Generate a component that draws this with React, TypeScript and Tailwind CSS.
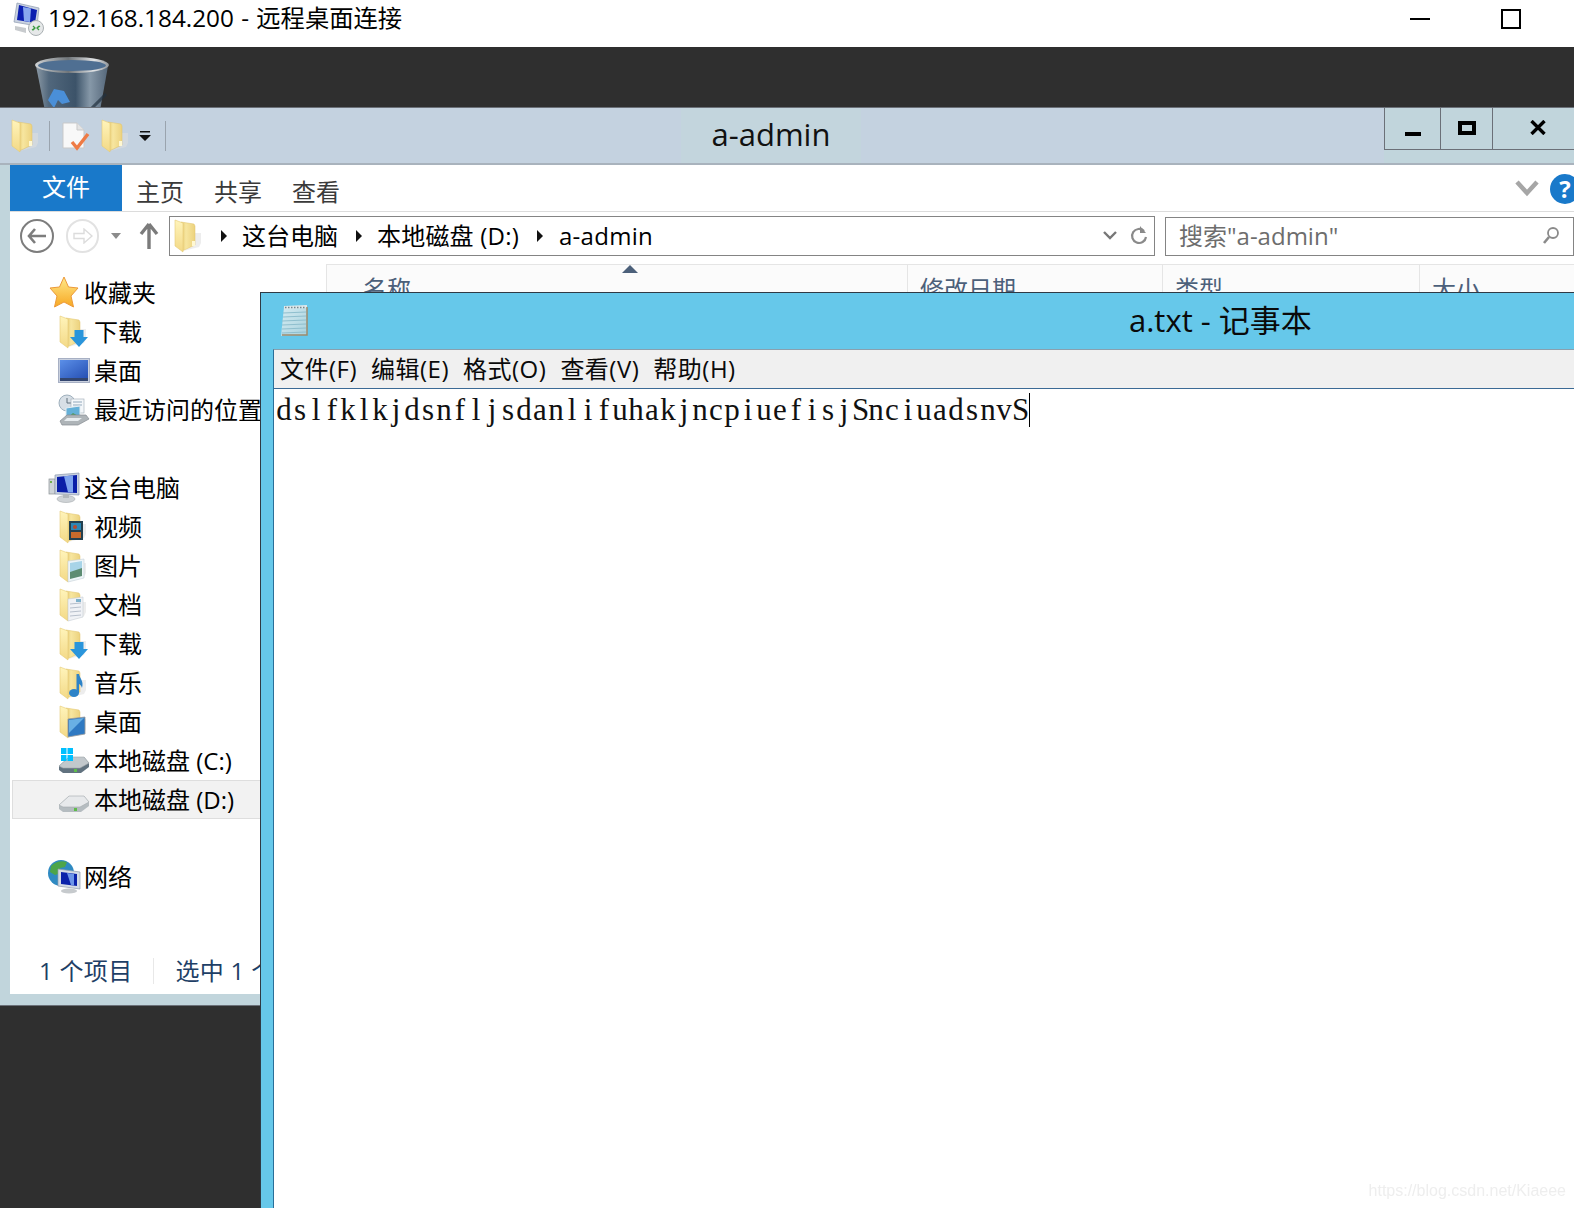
import React from "react";

const FONT = "[font-family:'Open_Sans','Noto_Sans_CJK_SC',sans-serif]";

function Folder({ overlay }: { overlay?: React.ReactNode }) {
  return (
    <svg width="30" height="34" viewBox="0 0 30 34" className="shrink-0">
      <defs>
        <linearGradient id="foldBack" x1="0" x2="1" y1="0" y2="0">
          <stop offset="0" stopColor="#e3c568" />
          <stop offset="0.35" stopColor="#f7e6a0" />
          <stop offset="1" stopColor="#ecd27e" />
        </linearGradient>
        <linearGradient id="foldFlap" x1="0" x2="0" y1="0" y2="1">
          <stop offset="0" stopColor="#fff4bb" />
          <stop offset="1" stopColor="#f3d986" />
        </linearGradient>
      </defs>
      <path d="M9 32 L25 28 L27 24 V14 L21 14 V26Z" fill="#dedede" opacity="0.55" />
      <path d="M7 3 L20 5 L21 7 V26 L8 32Z" fill="url(#foldBack)" stroke="#e0c36b" strokeWidth="0.5" />
      <path d="M1 1 L9 4 V33 L1 27Z" fill="url(#foldFlap)" stroke="#e6cb76" strokeWidth="0.6" />
      {overlay}
    </svg>
  );
}

const plainMark = <rect x="18" y="22" width="3" height="5" fill="#fff8d2" />;
const downArrow = <path d="M15.5 15 H24.5 V22 H29 L20 32 L11 22 H15.5Z" fill="#2a95db" />;
const videoOverlay = (
  <g>
    <rect x="10" y="11" width="14" height="19" fill="#23404f" />
    <rect x="12" y="13" width="10" height="7" fill="#2b86b5" />
    <rect x="12" y="22" width="10" height="6" fill="#c76a2c" />
    <circle cx="16" cy="17" r="2" fill="#b54a2e" />
  </g>
);
const pictureOverlay = (
  <g>
    <path d="M9 12 L25 10 V29 L9 33Z" fill="#eef5f8" stroke="#c6d0d6" strokeWidth="0.6" />
    <path d="M11 14 L23 12 V21 L11 23Z" fill="#a8d4e8" />
    <path d="M11 23 L23 19 V27 L11 30Z" fill="#5d8c72" />
  </g>
);
const docOverlay = (
  <g>
    <path d="M9 11 L24 9 V29 L9 33Z" fill="#f0f2f6" stroke="#c6ccd4" strokeWidth="0.6" />
    <path d="M11 16 L22 15 M11 20 L22 19 M11 24 L22 23 M11 28 L22 27" stroke="#a8b2c0" strokeWidth="0.8" />
    <rect x="17" y="11" width="5" height="3" fill="#7db1cc" />
  </g>
);
const musicOverlay = (
  <g fill="#2d83c8">
    <ellipse cx="15" cy="27" rx="5" ry="4" />
    <path d="M17.5 8 L20 8 C21 13 25 15 23 22 C22 19 20.5 18 20 18 V27 H17.5Z" />
  </g>
);
const desktopOverlay = (
  <g>
    <path d="M9 14 L26 12 V29 L9 32Z" fill="#2f79c2" stroke="#9a9a9a" strokeWidth="0.8" />
    <path d="M10 15 L25 13 L10 28Z" fill="#69b0e4" />
  </g>
);

function Star() {
  return (
    <svg width="30" height="33" viewBox="0 0 30 33" className="shrink-0">
      <defs>
        <linearGradient id="star" x1="0" x2="0" y1="0" y2="1">
          <stop offset="0" stopColor="#ffe98a" />
          <stop offset="1" stopColor="#f7a823" />
        </linearGradient>
      </defs>
      <path d="M15 1 L19.5 11 L29 12 L22 20 L24.5 31 L15 26 L5.5 31 L8 20 L1 12 L10.5 11Z" fill="url(#star)" stroke="#ec9a3a" strokeWidth="1" />
    </svg>
  );
}

function DesktopIcon() {
  return (
    <svg width="32" height="26" viewBox="0 0 32 26" className="shrink-0">
      <defs>
        <linearGradient id="desk" x1="0" x2="1" y1="0" y2="1">
          <stop offset="0" stopColor="#5b8fe8" />
          <stop offset="1" stopColor="#2650b4" />
        </linearGradient>
      </defs>
      <rect x="0.5" y="0.5" width="31" height="24" fill="#c9d0de" stroke="#a7b0c4" />
      <rect x="2" y="2" width="28" height="18" fill="url(#desk)" />
      <rect x="2" y="20" width="28" height="3" fill="#33466f" />
    </svg>
  );
}

function RecentIcon() {
  return (
    <svg width="32" height="32" viewBox="0 0 32 32" className="shrink-0">
      <circle cx="9" cy="9" r="8" fill="#d7dfe6" stroke="#9fb0bd" />
      <path d="M9 4 V9 H13" stroke="#60707c" strokeWidth="1" fill="none" />
      <rect x="13" y="5" width="13" height="14" fill="#f4f7fa" stroke="#a9b4be" strokeWidth="0.7" />
      <path d="M15 8 H24 M15 11 H24" stroke="#92a8bb" />
      <path d="M8 14 L22 12 V23 L8 25Z" fill="#64b0d8" stroke="#e4edf2" />
      <path d="M8 25 L15 19 L22 23 L8 25Z" fill="#4f9b63" />
      <path d="M2 27 L9 21 H28 L31 25 L20 31 H4Z" fill="#aeb4b8" stroke="#858b90" strokeWidth="0.7" />
      <path d="M9 24 H24 L20 27 H6Z" fill="#e7ecef" />
    </svg>
  );
}

function PcIcon({ size = 32 }: { size?: number }) {
  return (
    <svg width={size} height={size} viewBox="0 0 32 32" className="shrink-0">
      <rect x="1" y="7" width="6" height="15" fill="#cfd4d8" stroke="#8c9296" strokeWidth="0.7" />
      <rect x="2" y="9" width="2" height="2" fill="#72b04d" />
      <path d="M7 3 L31 1 V23 L7 22Z" fill="#c8d1e0" stroke="#8d99ad" strokeWidth="0.7" />
      <path d="M9 5 L29 3 V21 L9 20Z" fill="#0a1ea8" />
      <path d="M16 4.3 L25 3.5 V20.5 L20 20.2Z" fill="#7ea4ee" />
      <ellipse cx="18" cy="27" rx="9" ry="3.5" fill="#cfd3d6" stroke="#a4a9ad" strokeWidth="0.6" />
      <rect x="15" y="22" width="6" height="4" fill="#b3b8bc" />
    </svg>
  );
}

function Drive({ system }: { system?: boolean }) {
  return (
    <svg width="32" height="26" viewBox="0 0 32 26" className="shrink-0">
      <path d="M1 18 L11 9 H26 L31 15 V19 L23 25 H5 L1 22Z" fill={system ? "#61727f" : "#b5bcc0"} />
      <path d="M1 18 L11 9 H26 L31 15 L22 20 H5Z" fill={system ? "#c2c8cc" : "#e7e9eb"} stroke="#a2a9ad" strokeWidth="0.6" />
      <rect x="16" y="21" width="3" height="3" fill="#5ebc4a" />
      {system && (
        <g fill="#00c0ff">
          <rect x="3" y="0" width="5.5" height="6" />
          <rect x="9.5" y="0" width="5.5" height="6" />
          <rect x="3" y="7" width="5.5" height="6" />
          <rect x="9.5" y="7" width="5.5" height="6" />
        </g>
      )}
    </svg>
  );
}

function NetworkIcon() {
  return (
    <svg width="34" height="34" viewBox="0 0 34 34" className="shrink-0">
      <circle cx="14" cy="13" r="13" fill="#2f8ac2" />
      <path d="M4 6 C8 2 14 0 20 2 L18 7 L13 8 L14 13 L8 15 L3 12Z" fill="#4da54a" />
      <path d="M12 19 L17 18 L17 25 L13 25Z" fill="#4da54a" />
      <path d="M11 9 L33 12 V29 L11 26Z" fill="#d4dbe5" stroke="#8f9bac" strokeWidth="0.7" />
      <path d="M14 12 L30 14 V26 L14 24Z" fill="#0b22aa" />
      <path d="M20 13 L27 14 V25.5 L24 25Z" fill="#6e96e8" />
      <ellipse cx="22" cy="31" rx="8" ry="2.5" fill="#c6cacd" />
    </svg>
  );
}

function NoteCheck() {
  return (
    <svg width="28" height="32" viewBox="0 0 28 32" className="shrink-0">
      <path d="M1 3 H15 L22 10 V28 H1Z" fill="#f8f8f8" stroke="#c9c9c9" />
      <path d="M15 3 V10 H22" fill="#e4e4e4" stroke="#c9c9c9" />
      <path d="M10 22 L15 28 L26 14" fill="none" stroke="#ee7b45" strokeWidth="3.4" />
    </svg>
  );
}

function NotepadIcon() {
  return (
    <svg width="32" height="34" viewBox="0 0 32 34" className="shrink-0">
      <defs>
        <linearGradient id="pad" x1="0" x2="1" y1="0" y2="1">
          <stop offset="0" stopColor="#d6ecf2" />
          <stop offset="1" stopColor="#a8d2de" />
        </linearGradient>
      </defs>
      <path d="M6 3 L29 2 V31 L3 32Z" fill="url(#pad)" />
      <path d="M5 9 L28 8 M5 13 L28 12 M4 17 L28 16 M4 21 L28 20 M4 25 L28 24 M4 29 L28 28" stroke="#8fbfce" />
      <path d="M6 2 L29 1 V4 L6 5Z" fill="#dfe8ea" />
      <path d="M7 3.5 H28" stroke="#75888f" strokeWidth="1.6" strokeDasharray="1.5 1.5" />
      <path d="M29 3 V31 H4" fill="none" stroke="#9c8a6c" strokeWidth="1.5" />
    </svg>
  );
}

function RecycleBin() {
  return (
    <svg width="76" height="60" viewBox="0 0 76 60" className="shrink-0">
      <defs>
        <linearGradient id="bin" x1="0" x2="1" y1="0" y2="0">
          <stop offset="0" stopColor="#8b99a5" />
          <stop offset="0.18" stopColor="#51677c" />
          <stop offset="0.55" stopColor="#3c5369" />
          <stop offset="0.75" stopColor="#8698a8" />
          <stop offset="1" stopColor="#55677a" />
        </linearGradient>
        <linearGradient id="binRim" x1="0" x2="1" y1="0" y2="0">
          <stop offset="0" stopColor="#d0d3d5" />
          <stop offset="0.45" stopColor="#6f757a" />
          <stop offset="0.8" stopColor="#e2e4e6" />
          <stop offset="1" stopColor="#8f9499" />
        </linearGradient>
      </defs>
      <path d="M2 10 L12 60 H65 L74 10Z" fill="url(#bin)" />
      <ellipse cx="38" cy="9" rx="37" ry="8" fill="url(#binRim)" />
      <ellipse cx="38" cy="9.5" rx="34" ry="5.5" fill="#4f6f92" />
      <path d="M14 44 L20 33 L30 35 L36 46 L28 48 L24 44 L20 52Z" fill="#4a8fd8" />
      <path d="M22 56 L36 54 L34 60 H20Z" fill="#4a8fd8" />
      <path d="M50 60 L72 38" stroke="#22313f" strokeWidth="3" opacity="0.7" />
    </svg>
  );
}

function Caret() {
  return (
    <svg width="8" height="14" viewBox="0 0 8 14" className="shrink-0">
      <path d="M1 1 L7 7 L1 13Z" fill="#111" />
    </svg>
  );
}

function NavRow({ icon, label, indent, active }: { icon: React.ReactNode; label: string; indent?: boolean; active?: boolean }) {
  const pad = active ? "pl-[41px] border border-[#dedede] bg-[#f2f2f2]" : indent ? "pl-[42px]" : "pl-[31px]";
  return (
    <div className={`ml-[2px] flex h-[39px] items-center whitespace-nowrap text-[24px] text-black ${pad}`}>
      <div className={`flex justify-center ${indent ? "w-[40px]" : "w-[41px]"}`}>{icon}</div>
      <span>{label}</span>
    </div>
  );
}

const noteText = "dslfklkjdsnfljsdanlifuhakjncpiuefisjSnciuadsnvS";

export default function App() {
  return (
    <div className={`flex h-[1208px] w-[1574px] flex-col overflow-hidden bg-[#2f2f2f] relative ${FONT}`}>
      {/* remote desktop title */}
      <div className="flex h-[47px] shrink-0 items-center bg-white pb-[10px] pl-[12px] text-[24.3px] text-black">
        <svg width="32" height="34" viewBox="0 0 32 34" className="shrink-0">
          <path d="M2 20 L5 1 L27 6 L25 24Z" fill="#c9d2e0" stroke="#8e9bb0" strokeWidth="0.7" />
          <path d="M5 18 L7 3 L25 8 L23 21Z" fill="#0c1fb0" />
          <path d="M11 5 L19 6.5 L18 20 L12 19Z" fill="#88a8ee" />
          <path d="M3 24 L14 26 V31 L3 28Z" fill="#c8cbce" />
          <circle cx="24" cy="26" r="7.5" fill="#e6e8e9" stroke="#aab0b3" />
          <path d="M20 28 L23 26 M28 24 L25 26 M21 24 L23 26 L21 28 M27 24 L25 26 L27 28" stroke="#3c9a42" strokeWidth="1.3" fill="none" />
        </svg>
        <span className="ml-[4px] whitespace-nowrap [word-spacing:1px]">192.168.184.200 - 远程桌面连接</span>
        <div className="ml-auto flex items-center pr-[53px]">
          <div className="h-[2px] w-[20px] bg-black" />
          <div className="ml-[71px] h-[20px] w-[20px] border-2 border-black" />
        </div>
      </div>

      {/* desktop strip with recycle bin */}
      <div className="flex h-[60px] shrink-0 items-start overflow-hidden pl-[34px] pt-[9px]">
        <RecycleBin />
      </div>

      {/* explorer window */}
      <div className="flex h-[899px] w-full shrink-0 flex-col border-b border-t border-[#6b7078] bg-[#c1d5dc] pb-[11px] pl-[10px]">
        {/* title bar */}
        <div className="-ml-[10px] flex h-[55px] shrink-0 items-start bg-[#c4d2e0]">
          <div className="flex h-[55px] items-center pl-[11px]">
            <Folder overlay={plainMark} />
            <div className="ml-[8px] mr-[12px] h-[30px] w-px bg-[#9aa4ae]" />
            <NoteCheck />
            <div className="ml-[11px]"><Folder overlay={plainMark} /></div>
            <svg width="12" height="10" viewBox="0 0 12 10" className="ml-[8px]">
              <path d="M1 0 H11 V1.5 H1Z M0 4 H12 L6 10Z" fill="#111" />
            </svg>
            <div className="ml-[14px] h-[30px] w-px bg-[#9aa4ae]" />
          </div>
          <div className="ml-[515px] flex h-[55px] w-[180px] items-center justify-center bg-[#c3d5dd] pb-[3px] text-[31px] text-[#111]">a-admin</div>
          <div className="h-[55px] flex-1 bg-[#c4d2e0]" />
          <div className="flex h-[55px] w-[190px] items-start bg-[#c1d5dc]">
            <div className="flex">
              <div className="flex h-[42px] w-[56px] items-end justify-center border-b border-l border-[#6b7078] pb-[13px]">
                <div className="h-[4px] w-[16px] bg-black" />
              </div>
              <div className="flex h-[42px] w-[52px] items-start justify-center border-b border-l border-[#6b7078] pt-[13px]">
                <div className="h-[14px] w-[18px] border-[4px] border-black" />
              </div>
              <div className="flex h-[42px] w-[82px] items-start border-b border-l border-[#6b7078] pl-[37px] pt-[12px]">
                <svg width="16" height="15" viewBox="0 0 16 15">
                  <path d="M1.5 1 L14.5 14 M14.5 1 L1.5 14" stroke="#000" strokeWidth="3.4" />
                </svg>
              </div>
            </div>
          </div>
        </div>
        <div className="-ml-[10px] h-[2px] shrink-0 bg-[#a9b3bd]" />

        {/* ribbon tabs */}
        <div className="flex h-[47px] shrink-0 border-b border-[#dcdcdc] bg-white text-[24px]">
          <div className="flex h-[46px] w-[112px] items-center justify-center bg-[#1979ca] pb-[3px] text-white">文件</div>
          <div className="flex items-end gap-[30px] pb-[1px] pl-[14px] text-[#3a3a3a]">
            <span>主页</span>
            <span>共享</span>
            <span>查看</span>
          </div>
          <div className="ml-auto flex items-center gap-[11px] pt-[2px]">
            <svg width="24" height="18" viewBox="0 0 24 18">
              <path d="M2 2 L12 13 L22 2" fill="none" stroke="#a6a6a6" strokeWidth="4.5" />
            </svg>
            <div className="-mr-[6px] flex h-[30px] w-[30px] items-center justify-center rounded-full bg-[#1979ca] text-[24px] font-bold leading-none text-white">?</div>
          </div>
        </div>

        {/* address bar */}
        <div className="flex h-[52px] shrink-0 items-center bg-white pb-[4px]">
          <div className="ml-[10px] flex h-[34px] w-[34px] items-center justify-center rounded-full border-[2px] border-[#7d7d7d]">
            <svg width="20" height="16" viewBox="0 0 20 16">
              <path d="M8 1 L2 8 L8 15 M2 8 H19" fill="none" stroke="#7d7d7d" strokeWidth="2.6" />
            </svg>
          </div>
          <div className="ml-[12px] flex h-[34px] w-[33px] items-center justify-center rounded-full border-[2px] border-[#e2e2e2]">
            <svg width="20" height="16" viewBox="0 0 20 16">
              <path d="M1 5.5 H11 V1 L19 8 L11 15 V10.5 H1Z" fill="none" stroke="#dcdcdc" strokeWidth="1.4" />
            </svg>
          </div>
          <svg width="10" height="6" viewBox="0 0 10 6" className="ml-[12px]">
            <path d="M0 0 H10 L5 6Z" fill="#8c8c8c" />
          </svg>
          <svg width="20" height="28" viewBox="0 0 20 28" className="ml-[18px]">
            <path d="M10 2 L18 12 M10 2 L2 12 M10 2 V27" fill="none" stroke="#7b7b7b" strokeWidth="3.4" />
          </svg>
          <div className="ml-[10px] flex h-[40px] w-[986px] items-center border border-[#848484] pl-[4px] text-[24px] text-black">
            <Folder overlay={plainMark} />
            <div className="ml-[16px]"><Caret /></div>
            <span className="ml-[14px] whitespace-nowrap">这台电脑</span>
            <div className="ml-[17px]"><Caret /></div>
            <span className="ml-[14px] whitespace-nowrap tracking-[0.2px]">本地磁盘 (D:)</span>
            <div className="ml-[17px]"><Caret /></div>
            <span className="ml-[15px] whitespace-nowrap tracking-[0.3px]">a-admin</span>
            <svg width="14" height="10" viewBox="0 0 14 10" className="ml-auto">
              <path d="M1 1 L7 7 L13 1" fill="none" stroke="#777" strokeWidth="2.4" />
            </svg>
            <svg width="20" height="22" viewBox="0 0 20 22" className="ml-[12px] mr-[5px]">
              <path d="M15 6 A7 7 0 1 0 17 12" fill="none" stroke="#8a8a8a" strokeWidth="2.2" />
              <path d="M11 1 V8 H17Z" fill="#8a8a8a" />
            </svg>
          </div>
          <div className="ml-[10px] flex h-[39px] flex-1 items-center justify-between border border-[#848484] px-[13px] text-[24px] text-[#6d6d6d]">
            <span className="whitespace-nowrap">搜索"a-admin"</span>
            <svg width="18" height="20" viewBox="0 0 18 20">
              <circle cx="11" cy="7" r="5" fill="none" stroke="#8a8a8a" strokeWidth="1.8" />
              <path d="M7 11 L2 17" stroke="#8a8a8a" strokeWidth="2.6" />
            </svg>
          </div>
        </div>

        {/* body */}
        <div className="flex min-h-0 flex-1 bg-white">
          <div className="flex w-[316px] shrink-0 flex-col pt-[9px]">
            <NavRow icon={<Star />} label="收藏夹" />
            <NavRow indent icon={<Folder overlay={downArrow} />} label="下载" />
            <NavRow indent icon={<DesktopIcon />} label="桌面" />
            <NavRow indent icon={<RecentIcon />} label="最近访问的位置" />
            <div className="h-[39px]" />
            <NavRow icon={<PcIcon />} label="这台电脑" />
            <NavRow indent icon={<Folder overlay={videoOverlay} />} label="视频" />
            <NavRow indent icon={<Folder overlay={pictureOverlay} />} label="图片" />
            <NavRow indent icon={<Folder overlay={docOverlay} />} label="文档" />
            <NavRow indent icon={<Folder overlay={downArrow} />} label="下载" />
            <NavRow indent icon={<Folder overlay={musicOverlay} />} label="音乐" />
            <NavRow indent icon={<Folder overlay={desktopOverlay} />} label="桌面" />
            <NavRow indent icon={<Drive system />} label="本地磁盘 (C:)" />
            <NavRow indent active icon={<Drive />} label="本地磁盘 (D:)" />
            <div className="h-[38px]" />
            <NavRow icon={<NetworkIcon />} label="网络" />
            <div className="mt-auto flex h-[45px] items-center whitespace-nowrap pb-[1px] pl-[29px] text-[24px] tracking-[0.3px] text-[#1e3f66]">
              <span>1 个项目</span>
              <div className="mx-[21px] h-[26px] w-px bg-[#e8e8e8]" />
              <span>选中 1 个</span>
            </div>
          </div>
          <div className="relative min-w-0 flex-1">
            <div className="flex h-[30px] border-l border-t border-[#e5e5e5] bg-[#fbfbfb] text-[24px] text-[#4c607a]">
              <div className="w-[581px] border-r border-[#e5e5e5] pl-[36px] pt-[6px]">名称</div>
              <div className="w-[255px] border-r border-[#e5e5e5] pl-[12px] pt-[6px]">修改日期</div>
              <div className="w-[257px] border-r border-[#e5e5e5] pl-[12px] pt-[6px]">类型</div>
              <div className="flex-1 pl-[12px] pt-[6px]">大小</div>
            </div>
            <svg width="16" height="8" viewBox="0 0 16 8" className="absolute left-[296px] top-[1px]">
              <path d="M0 8 L8 0 L16 8Z" fill="#4c607a" />
            </svg>
          </div>
        </div>
      </div>

      {/* notepad window */}
      <div className="absolute bottom-0 left-[260px] right-0 top-[292px] flex flex-col border-l border-t border-[#2f3a45] bg-[#66c8ea]">
        <div className="flex h-[56px] shrink-0 items-center pl-[17px]">
          <NotepadIcon />
          <div className="ml-[819px] whitespace-nowrap pb-[2px] text-[31px] text-[#0a0a0a]">a.txt - 记事本</div>
        </div>
        <div className="ml-[12px] flex min-h-0 flex-1 flex-col border-l border-t border-[#2a6f99] border-t-[#8aa0ae] bg-white">
          <div className="flex h-[39px] shrink-0 items-center gap-[14px] border-b border-[#3b6a95] bg-[#f0f0f0] pl-[6px] text-[24px] tracking-[0.5px] text-[#0a0a0a]">
            <span>文件(F)</span>
            <span>编辑(E)</span>
            <span>格式(O)</span>
            <span>查看(V)</span>
            <span>帮助(H)</span>
          </div>
          <div className="relative flex-1 pl-[2px] pt-[4px]">
            <div className="flex h-[34px] items-center whitespace-nowrap font-['Liberation_Serif',serif] text-[31px] text-[#111]">
              {noteText.split("").map((ch, i) => (
                <span key={i} className="inline-block w-[16px] text-center">{ch}</span>
              ))}
              <span className="ml-[1px] h-[34px] w-px bg-black" />
            </div>
            <div className="absolute bottom-[5px] right-[8px] whitespace-nowrap font-['Liberation_Sans',sans-serif] text-[16px] text-[#eeeeee] blur-[0.5px]">
              https://blog.csdn.net/Kiaeee
            </div>
          </div>
        </div>
      </div>
    </div>
  );
}
